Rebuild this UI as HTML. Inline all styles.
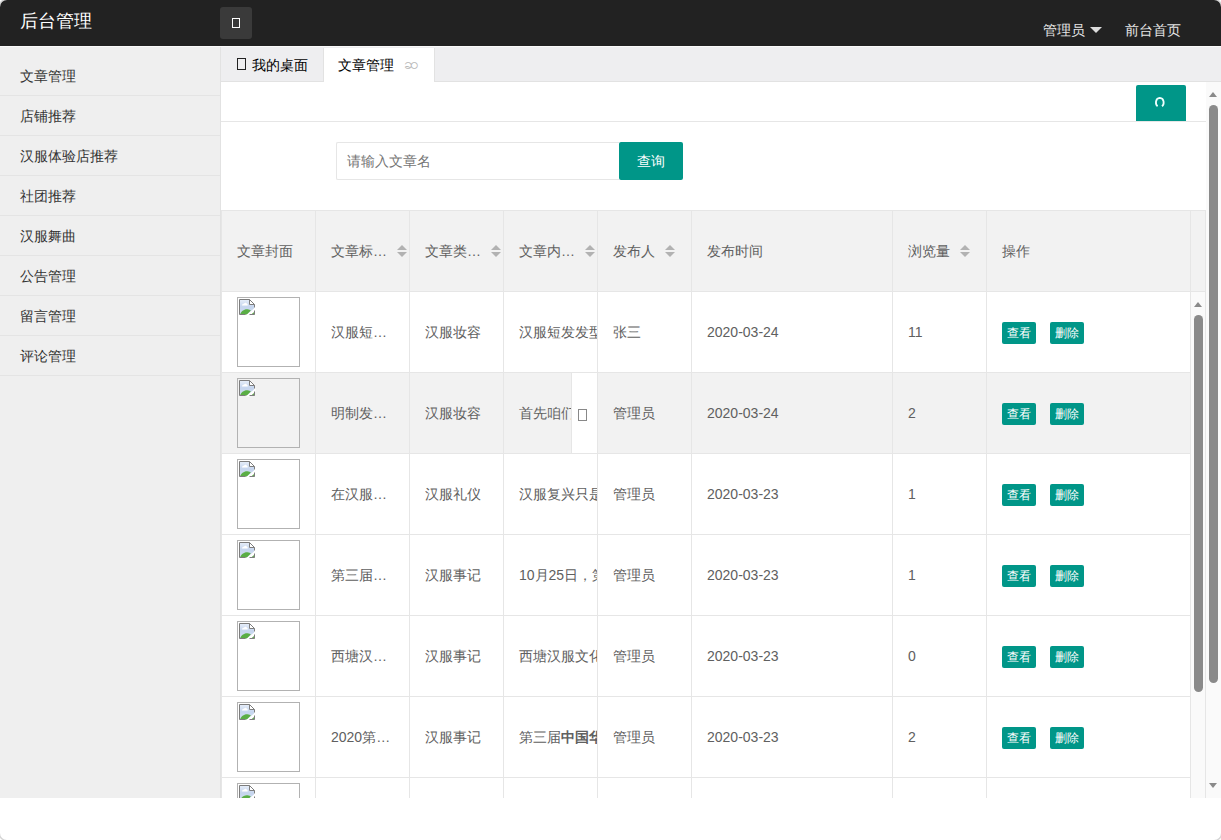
<!DOCTYPE html>
<html><head><meta charset="utf-8">
<style>
*{margin:0;padding:0;box-sizing:border-box}
html,body{width:1221px;height:840px;overflow:hidden;background:#fff;font-family:"Liberation Sans",sans-serif;font-size:14px;color:#333}
.abs{position:absolute}
#frame{position:absolute;left:0;top:0;width:1221px;height:840px;border-radius:7px;overflow:hidden;background:#fff;box-shadow:0 0 0 1.5px #d4d4d4}
#header{left:0;top:0;width:1221px;height:46px;background:#222}
#hl{left:0;top:46px;width:1221px;height:1px;background:#fafafa}
#logo{left:20px;top:9px;font-size:18px;line-height:24px;color:#fff}
#toggle{left:220px;top:7px;width:32px;height:32px;background:#3a3a3a;border-radius:3px}
#toggle i{position:absolute;left:12px;top:11px;width:8px;height:10px;border:1.5px solid #fff}
.hnav{top:20px;line-height:20px;font-size:14px;color:#e6e6e6}
#side{left:0;top:47px;width:221px;height:751px;background:#efefef;border-right:1px solid #e2e2e2}
#side ul{list-style:none;position:absolute;left:0;top:9px;width:220px}
#side li{height:40px;line-height:40px;padding-left:20px;border-bottom:1px solid #e4e4e4;color:#333;font-size:14px}
#tabbar{left:221px;top:47px;width:1000px;height:35px;background:#eeeef0;border-bottom:1px solid #e2e2e2}
.tab{top:0;height:36px;line-height:35px;font-size:14px;color:#000}
#content{left:221px;top:82px;width:1000px;height:716px;background:#fff;overflow:hidden}
</style></head><body>
<div id="frame">
  <div id="header" class="abs">
    <div id="logo" class="abs">后台管理</div>
    <div id="toggle" class="abs"><i></i></div>
    <div class="abs hnav" style="left:1043px">管理员</div>
    <div class="abs" style="left:1090px;top:27px;width:0;height:0;border-left:6px solid transparent;border-right:6px solid transparent;border-top:6px solid #ddd"></div>
    <div class="abs hnav" style="left:1125px">前台首页</div>
  </div>
  <div id="hl" class="abs"></div>
  <div id="side" class="abs">
    <ul>
      <li>文章管理</li><li>店铺推荐</li><li>汉服体验店推荐</li><li>社团推荐</li><li>汉服舞曲</li><li>公告管理</li><li>留言管理</li><li>评论管理</li>
    </ul>
  </div>
  <div id="tabbar" class="abs">
    <div class="abs tab" style="left:0;width:102px"><span class="abs" style="left:16px;top:11px;width:9px;height:12px;border:1.5px solid #222"></span><span class="abs" style="left:31px;top:1px">我的桌面</span></div>
    <div class="abs tab" style="left:102px;top:1px;width:112px;height:35px;background:#fff;border-left:1px solid #e2e2e2;border-right:1px solid #e2e2e2"><span class="abs" style="left:14px;top:0">文章管理</span><span class="abs" style="left:80px;top:-2px;font-size:15px;color:#b8b8b8">&#x1006;</span></div>
  </div>
  <div id="content" class="abs">
<div class="abs" style="left:0px;top:39px;width:985px;height:1px;background:#e6e6e6"></div>
<div class="abs" style="left:915px;top:3px;width:50px;height:36px;background:#009688;border-radius:2px 2px 0 0"><svg class="abs" style="left:18px;top:11px" width="12" height="12" viewBox="0 0 12 12"><path d="M3.6 10.2C1.2 8.5 1 2.2 5.8 1.8C10.6 2.2 10.4 8.5 8 10.2" fill="none" stroke="#f0fffd" stroke-width="1.8"/></svg></div>
<div class="abs" style="left:115px;top:60px;width:283px;height:38px;border:1px solid #e6e6e6;border-right:none;border-radius:2px 0 0 2px"><span class="abs" style="left:10px;top:9px;line-height:18px;color:#757575">请输入文章名</span></div>
<div class="abs" style="left:398px;top:60px;width:64px;height:38px;background:#009688;border-radius:2px;color:#fff;text-align:center;line-height:38px">查询</div>
<div class="abs" style="left:0px;top:128px;width:985px;height:82px;background:#f2f2f2;border:1px solid #e6e6e6;border-right:none"></div>
<div class="abs" style="left:16px;top:160px;width:150px;height:18px;line-height:18px;color:#606060;white-space:nowrap">文章封面</div>
<div class="abs" style="left:94px;top:128px;width:1px;height:82px;background:#e6e6e6"></div>
<div class="abs" style="left:110px;top:160px;width:150px;height:18px;line-height:18px;color:#606060;white-space:nowrap">文章标…</div>
<div class="abs" style="left:176px;top:163px;width:10px;height:12px;"><span class="abs" style="left:0;top:0;border:5px solid transparent;border-top:none;border-bottom:5px solid #b2b2b2"></span><span class="abs" style="left:0;top:7px;border:5px solid transparent;border-bottom:none;border-top:5px solid #b2b2b2"></span></div>
<div class="abs" style="left:188px;top:128px;width:1px;height:82px;background:#e6e6e6"></div>
<div class="abs" style="left:204px;top:160px;width:150px;height:18px;line-height:18px;color:#606060;white-space:nowrap">文章类…</div>
<div class="abs" style="left:270px;top:163px;width:10px;height:12px;"><span class="abs" style="left:0;top:0;border:5px solid transparent;border-top:none;border-bottom:5px solid #b2b2b2"></span><span class="abs" style="left:0;top:7px;border:5px solid transparent;border-bottom:none;border-top:5px solid #b2b2b2"></span></div>
<div class="abs" style="left:282px;top:128px;width:1px;height:82px;background:#e6e6e6"></div>
<div class="abs" style="left:298px;top:160px;width:150px;height:18px;line-height:18px;color:#606060;white-space:nowrap">文章内…</div>
<div class="abs" style="left:364px;top:163px;width:10px;height:12px;"><span class="abs" style="left:0;top:0;border:5px solid transparent;border-top:none;border-bottom:5px solid #b2b2b2"></span><span class="abs" style="left:0;top:7px;border:5px solid transparent;border-bottom:none;border-top:5px solid #b2b2b2"></span></div>
<div class="abs" style="left:376px;top:128px;width:1px;height:82px;background:#e6e6e6"></div>
<div class="abs" style="left:392px;top:160px;width:150px;height:18px;line-height:18px;color:#606060;white-space:nowrap">发布人</div>
<div class="abs" style="left:444px;top:163px;width:10px;height:12px;"><span class="abs" style="left:0;top:0;border:5px solid transparent;border-top:none;border-bottom:5px solid #b2b2b2"></span><span class="abs" style="left:0;top:7px;border:5px solid transparent;border-bottom:none;border-top:5px solid #b2b2b2"></span></div>
<div class="abs" style="left:470px;top:128px;width:1px;height:82px;background:#e6e6e6"></div>
<div class="abs" style="left:486px;top:160px;width:150px;height:18px;line-height:18px;color:#606060;white-space:nowrap">发布时间</div>
<div class="abs" style="left:671px;top:128px;width:1px;height:82px;background:#e6e6e6"></div>
<div class="abs" style="left:687px;top:160px;width:150px;height:18px;line-height:18px;color:#606060;white-space:nowrap">浏览量</div>
<div class="abs" style="left:739px;top:163px;width:10px;height:12px;"><span class="abs" style="left:0;top:0;border:5px solid transparent;border-top:none;border-bottom:5px solid #b2b2b2"></span><span class="abs" style="left:0;top:7px;border:5px solid transparent;border-bottom:none;border-top:5px solid #b2b2b2"></span></div>
<div class="abs" style="left:765px;top:128px;width:1px;height:82px;background:#e6e6e6"></div>
<div class="abs" style="left:781px;top:160px;width:150px;height:18px;line-height:18px;color:#606060;white-space:nowrap">操作</div>
<div class="abs" style="left:969px;top:128px;width:1px;height:82px;background:#e6e6e6"></div>
<div class="abs" style="left:984px;top:128px;width:1px;height:82px;background:#e6e6e6"></div>
<div class="abs" style="left:0px;top:209px;width:969px;height:82px;background:#fff;border-top:1px solid #e6e6e6;border-left:1px solid #e6e6e6"></div>
<div class="abs" style="left:94px;top:209px;width:1px;height:82px;background:#e6e6e6"></div>
<div class="abs" style="left:188px;top:209px;width:1px;height:82px;background:#e6e6e6"></div>
<div class="abs" style="left:282px;top:209px;width:1px;height:82px;background:#e6e6e6"></div>
<div class="abs" style="left:376px;top:209px;width:1px;height:82px;background:#e6e6e6"></div>
<div class="abs" style="left:470px;top:209px;width:1px;height:82px;background:#e6e6e6"></div>
<div class="abs" style="left:671px;top:209px;width:1px;height:82px;background:#e6e6e6"></div>
<div class="abs" style="left:765px;top:209px;width:1px;height:82px;background:#e6e6e6"></div>
<div class="abs" style="left:16px;top:215px;width:63px;height:70px;border:1px solid #b2b2b2;background:transparent;overflow:hidden"><svg class="abs" style="left:1px;top:1px" width="17" height="17" viewBox="0 0 17 17"><defs><linearGradient id="sk" x1="0" y1="0" x2="0" y2="1"><stop offset="0" stop-color="#e4ecf8"/><stop offset="0.5" stop-color="#c5d5ee"/><stop offset="1" stop-color="#d2def0"/></linearGradient></defs><path d="M1 1H10.5V5.5H15V15H1Z" fill="url(#sk)"/><path d="M3 6.5C3 5 4.5 4.5 5 4.8C5.5 3.5 7.5 3.5 8 5C9 5 9 6.5 8.5 6.5Z" fill="#fff"/><path d="M1 15.5C2 12.5 5 10 8.5 10.3C10 10.5 11 11 11.8 11.6L8 15.5Z" fill="#5aae45"/><path d="M11 15.5L15.5 12V15.5Z" fill="#67a956"/><path d="M10.5 1L15.5 6H10.5Z" fill="#fff"/><path d="M6.8 16.5L16.5 8.2V11.8L11 16.5Z" fill="#fff"/><path d="M0.5 15.5V0.5H10.5L15.5 5.5V8.5M15.5 11.5V15.5H10.5M6.5 15.5H0.5M10.5 0.5V5.5H15.5" fill="none" stroke="#7d7d7d"/></svg></div>
<div class="abs" style="left:110px;top:241px;width:78px;height:18px;line-height:18px;color:#606060;white-space:nowrap;overflow:hidden">汉服短…</div>
<div class="abs" style="left:204px;top:241px;width:78px;height:18px;line-height:18px;color:#606060;white-space:nowrap;overflow:hidden">汉服妆容</div>
<div class="abs" style="left:283px;top:210px;width:93px;height:80px;overflow:hidden"><span class="abs" style="left:15px;top:31px;line-height:18px;color:#606060;white-space:nowrap">汉服短发发型介绍</span></div>
<div class="abs" style="left:392px;top:241px;width:78px;height:18px;line-height:18px;color:#606060;white-space:nowrap;overflow:hidden">张三</div>
<div class="abs" style="left:486px;top:241px;width:185px;height:18px;line-height:18px;color:#606060;white-space:nowrap;overflow:hidden">2020-03-24</div>
<div class="abs" style="left:687px;top:241px;width:60px;height:18px;line-height:18px;color:#606060">11</div>
<div class="abs" style="left:781px;top:240px;width:34px;height:22px;background:#009688;border-radius:2px;color:#fff;font-size:12px;line-height:22px;text-align:center">查看</div>
<div class="abs" style="left:829px;top:240px;width:34px;height:22px;background:#009688;border-radius:2px;color:#fff;font-size:12px;line-height:22px;text-align:center">删除</div>
<div class="abs" style="left:0px;top:290px;width:969px;height:82px;background:#f2f2f2;border-top:1px solid #e6e6e6;border-left:1px solid #e6e6e6"></div>
<div class="abs" style="left:94px;top:290px;width:1px;height:82px;background:#e6e6e6"></div>
<div class="abs" style="left:188px;top:290px;width:1px;height:82px;background:#e6e6e6"></div>
<div class="abs" style="left:282px;top:290px;width:1px;height:82px;background:#e6e6e6"></div>
<div class="abs" style="left:376px;top:290px;width:1px;height:82px;background:#e6e6e6"></div>
<div class="abs" style="left:470px;top:290px;width:1px;height:82px;background:#e6e6e6"></div>
<div class="abs" style="left:671px;top:290px;width:1px;height:82px;background:#e6e6e6"></div>
<div class="abs" style="left:765px;top:290px;width:1px;height:82px;background:#e6e6e6"></div>
<div class="abs" style="left:16px;top:296px;width:63px;height:70px;border:1px solid #b2b2b2;background:transparent;overflow:hidden"><svg class="abs" style="left:1px;top:1px" width="17" height="17" viewBox="0 0 17 17"><defs><linearGradient id="sk" x1="0" y1="0" x2="0" y2="1"><stop offset="0" stop-color="#e4ecf8"/><stop offset="0.5" stop-color="#c5d5ee"/><stop offset="1" stop-color="#d2def0"/></linearGradient></defs><path d="M1 1H10.5V5.5H15V15H1Z" fill="url(#sk)"/><path d="M3 6.5C3 5 4.5 4.5 5 4.8C5.5 3.5 7.5 3.5 8 5C9 5 9 6.5 8.5 6.5Z" fill="#fff"/><path d="M1 15.5C2 12.5 5 10 8.5 10.3C10 10.5 11 11 11.8 11.6L8 15.5Z" fill="#5aae45"/><path d="M11 15.5L15.5 12V15.5Z" fill="#67a956"/><path d="M10.5 1L15.5 6H10.5Z" fill="#fff"/><path d="M6.8 16.5L16.5 8.2V11.8L11 16.5Z" fill="#fff"/><path d="M0.5 15.5V0.5H10.5L15.5 5.5V8.5M15.5 11.5V15.5H10.5M6.5 15.5H0.5M10.5 0.5V5.5H15.5" fill="none" stroke="#7d7d7d"/></svg></div>
<div class="abs" style="left:110px;top:322px;width:78px;height:18px;line-height:18px;color:#606060;white-space:nowrap;overflow:hidden">明制发…</div>
<div class="abs" style="left:204px;top:322px;width:78px;height:18px;line-height:18px;color:#606060;white-space:nowrap;overflow:hidden">汉服妆容</div>
<div class="abs" style="left:283px;top:291px;width:93px;height:80px;overflow:hidden"><span class="abs" style="left:15px;top:31px;line-height:18px;color:#606060;white-space:nowrap">首先咱们</span></div>
<div class="abs" style="left:392px;top:322px;width:78px;height:18px;line-height:18px;color:#606060;white-space:nowrap;overflow:hidden">管理员</div>
<div class="abs" style="left:486px;top:322px;width:185px;height:18px;line-height:18px;color:#606060;white-space:nowrap;overflow:hidden">2020-03-24</div>
<div class="abs" style="left:687px;top:322px;width:60px;height:18px;line-height:18px;color:#606060">2</div>
<div class="abs" style="left:781px;top:321px;width:34px;height:22px;background:#009688;border-radius:2px;color:#fff;font-size:12px;line-height:22px;text-align:center">查看</div>
<div class="abs" style="left:829px;top:321px;width:34px;height:22px;background:#009688;border-radius:2px;color:#fff;font-size:12px;line-height:22px;text-align:center">删除</div>
<div class="abs" style="left:0px;top:371px;width:969px;height:82px;background:#fff;border-top:1px solid #e6e6e6;border-left:1px solid #e6e6e6"></div>
<div class="abs" style="left:94px;top:371px;width:1px;height:82px;background:#e6e6e6"></div>
<div class="abs" style="left:188px;top:371px;width:1px;height:82px;background:#e6e6e6"></div>
<div class="abs" style="left:282px;top:371px;width:1px;height:82px;background:#e6e6e6"></div>
<div class="abs" style="left:376px;top:371px;width:1px;height:82px;background:#e6e6e6"></div>
<div class="abs" style="left:470px;top:371px;width:1px;height:82px;background:#e6e6e6"></div>
<div class="abs" style="left:671px;top:371px;width:1px;height:82px;background:#e6e6e6"></div>
<div class="abs" style="left:765px;top:371px;width:1px;height:82px;background:#e6e6e6"></div>
<div class="abs" style="left:16px;top:377px;width:63px;height:70px;border:1px solid #b2b2b2;background:transparent;overflow:hidden"><svg class="abs" style="left:1px;top:1px" width="17" height="17" viewBox="0 0 17 17"><defs><linearGradient id="sk" x1="0" y1="0" x2="0" y2="1"><stop offset="0" stop-color="#e4ecf8"/><stop offset="0.5" stop-color="#c5d5ee"/><stop offset="1" stop-color="#d2def0"/></linearGradient></defs><path d="M1 1H10.5V5.5H15V15H1Z" fill="url(#sk)"/><path d="M3 6.5C3 5 4.5 4.5 5 4.8C5.5 3.5 7.5 3.5 8 5C9 5 9 6.5 8.5 6.5Z" fill="#fff"/><path d="M1 15.5C2 12.5 5 10 8.5 10.3C10 10.5 11 11 11.8 11.6L8 15.5Z" fill="#5aae45"/><path d="M11 15.5L15.5 12V15.5Z" fill="#67a956"/><path d="M10.5 1L15.5 6H10.5Z" fill="#fff"/><path d="M6.8 16.5L16.5 8.2V11.8L11 16.5Z" fill="#fff"/><path d="M0.5 15.5V0.5H10.5L15.5 5.5V8.5M15.5 11.5V15.5H10.5M6.5 15.5H0.5M10.5 0.5V5.5H15.5" fill="none" stroke="#7d7d7d"/></svg></div>
<div class="abs" style="left:110px;top:403px;width:78px;height:18px;line-height:18px;color:#606060;white-space:nowrap;overflow:hidden">在汉服…</div>
<div class="abs" style="left:204px;top:403px;width:78px;height:18px;line-height:18px;color:#606060;white-space:nowrap;overflow:hidden">汉服礼仪</div>
<div class="abs" style="left:283px;top:372px;width:93px;height:80px;overflow:hidden"><span class="abs" style="left:15px;top:31px;line-height:18px;color:#606060;white-space:nowrap">汉服复兴只是一个</span></div>
<div class="abs" style="left:392px;top:403px;width:78px;height:18px;line-height:18px;color:#606060;white-space:nowrap;overflow:hidden">管理员</div>
<div class="abs" style="left:486px;top:403px;width:185px;height:18px;line-height:18px;color:#606060;white-space:nowrap;overflow:hidden">2020-03-23</div>
<div class="abs" style="left:687px;top:403px;width:60px;height:18px;line-height:18px;color:#606060">1</div>
<div class="abs" style="left:781px;top:402px;width:34px;height:22px;background:#009688;border-radius:2px;color:#fff;font-size:12px;line-height:22px;text-align:center">查看</div>
<div class="abs" style="left:829px;top:402px;width:34px;height:22px;background:#009688;border-radius:2px;color:#fff;font-size:12px;line-height:22px;text-align:center">删除</div>
<div class="abs" style="left:0px;top:452px;width:969px;height:82px;background:#fff;border-top:1px solid #e6e6e6;border-left:1px solid #e6e6e6"></div>
<div class="abs" style="left:94px;top:452px;width:1px;height:82px;background:#e6e6e6"></div>
<div class="abs" style="left:188px;top:452px;width:1px;height:82px;background:#e6e6e6"></div>
<div class="abs" style="left:282px;top:452px;width:1px;height:82px;background:#e6e6e6"></div>
<div class="abs" style="left:376px;top:452px;width:1px;height:82px;background:#e6e6e6"></div>
<div class="abs" style="left:470px;top:452px;width:1px;height:82px;background:#e6e6e6"></div>
<div class="abs" style="left:671px;top:452px;width:1px;height:82px;background:#e6e6e6"></div>
<div class="abs" style="left:765px;top:452px;width:1px;height:82px;background:#e6e6e6"></div>
<div class="abs" style="left:16px;top:458px;width:63px;height:70px;border:1px solid #b2b2b2;background:transparent;overflow:hidden"><svg class="abs" style="left:1px;top:1px" width="17" height="17" viewBox="0 0 17 17"><defs><linearGradient id="sk" x1="0" y1="0" x2="0" y2="1"><stop offset="0" stop-color="#e4ecf8"/><stop offset="0.5" stop-color="#c5d5ee"/><stop offset="1" stop-color="#d2def0"/></linearGradient></defs><path d="M1 1H10.5V5.5H15V15H1Z" fill="url(#sk)"/><path d="M3 6.5C3 5 4.5 4.5 5 4.8C5.5 3.5 7.5 3.5 8 5C9 5 9 6.5 8.5 6.5Z" fill="#fff"/><path d="M1 15.5C2 12.5 5 10 8.5 10.3C10 10.5 11 11 11.8 11.6L8 15.5Z" fill="#5aae45"/><path d="M11 15.5L15.5 12V15.5Z" fill="#67a956"/><path d="M10.5 1L15.5 6H10.5Z" fill="#fff"/><path d="M6.8 16.5L16.5 8.2V11.8L11 16.5Z" fill="#fff"/><path d="M0.5 15.5V0.5H10.5L15.5 5.5V8.5M15.5 11.5V15.5H10.5M6.5 15.5H0.5M10.5 0.5V5.5H15.5" fill="none" stroke="#7d7d7d"/></svg></div>
<div class="abs" style="left:110px;top:484px;width:78px;height:18px;line-height:18px;color:#606060;white-space:nowrap;overflow:hidden">第三届…</div>
<div class="abs" style="left:204px;top:484px;width:78px;height:18px;line-height:18px;color:#606060;white-space:nowrap;overflow:hidden">汉服事记</div>
<div class="abs" style="left:283px;top:453px;width:93px;height:80px;overflow:hidden"><span class="abs" style="left:15px;top:31px;line-height:18px;color:#606060;white-space:nowrap">10月25日，第三届</span></div>
<div class="abs" style="left:392px;top:484px;width:78px;height:18px;line-height:18px;color:#606060;white-space:nowrap;overflow:hidden">管理员</div>
<div class="abs" style="left:486px;top:484px;width:185px;height:18px;line-height:18px;color:#606060;white-space:nowrap;overflow:hidden">2020-03-23</div>
<div class="abs" style="left:687px;top:484px;width:60px;height:18px;line-height:18px;color:#606060">1</div>
<div class="abs" style="left:781px;top:483px;width:34px;height:22px;background:#009688;border-radius:2px;color:#fff;font-size:12px;line-height:22px;text-align:center">查看</div>
<div class="abs" style="left:829px;top:483px;width:34px;height:22px;background:#009688;border-radius:2px;color:#fff;font-size:12px;line-height:22px;text-align:center">删除</div>
<div class="abs" style="left:0px;top:533px;width:969px;height:82px;background:#fff;border-top:1px solid #e6e6e6;border-left:1px solid #e6e6e6"></div>
<div class="abs" style="left:94px;top:533px;width:1px;height:82px;background:#e6e6e6"></div>
<div class="abs" style="left:188px;top:533px;width:1px;height:82px;background:#e6e6e6"></div>
<div class="abs" style="left:282px;top:533px;width:1px;height:82px;background:#e6e6e6"></div>
<div class="abs" style="left:376px;top:533px;width:1px;height:82px;background:#e6e6e6"></div>
<div class="abs" style="left:470px;top:533px;width:1px;height:82px;background:#e6e6e6"></div>
<div class="abs" style="left:671px;top:533px;width:1px;height:82px;background:#e6e6e6"></div>
<div class="abs" style="left:765px;top:533px;width:1px;height:82px;background:#e6e6e6"></div>
<div class="abs" style="left:16px;top:539px;width:63px;height:70px;border:1px solid #b2b2b2;background:transparent;overflow:hidden"><svg class="abs" style="left:1px;top:1px" width="17" height="17" viewBox="0 0 17 17"><defs><linearGradient id="sk" x1="0" y1="0" x2="0" y2="1"><stop offset="0" stop-color="#e4ecf8"/><stop offset="0.5" stop-color="#c5d5ee"/><stop offset="1" stop-color="#d2def0"/></linearGradient></defs><path d="M1 1H10.5V5.5H15V15H1Z" fill="url(#sk)"/><path d="M3 6.5C3 5 4.5 4.5 5 4.8C5.5 3.5 7.5 3.5 8 5C9 5 9 6.5 8.5 6.5Z" fill="#fff"/><path d="M1 15.5C2 12.5 5 10 8.5 10.3C10 10.5 11 11 11.8 11.6L8 15.5Z" fill="#5aae45"/><path d="M11 15.5L15.5 12V15.5Z" fill="#67a956"/><path d="M10.5 1L15.5 6H10.5Z" fill="#fff"/><path d="M6.8 16.5L16.5 8.2V11.8L11 16.5Z" fill="#fff"/><path d="M0.5 15.5V0.5H10.5L15.5 5.5V8.5M15.5 11.5V15.5H10.5M6.5 15.5H0.5M10.5 0.5V5.5H15.5" fill="none" stroke="#7d7d7d"/></svg></div>
<div class="abs" style="left:110px;top:565px;width:78px;height:18px;line-height:18px;color:#606060;white-space:nowrap;overflow:hidden">西塘汉…</div>
<div class="abs" style="left:204px;top:565px;width:78px;height:18px;line-height:18px;color:#606060;white-space:nowrap;overflow:hidden">汉服事记</div>
<div class="abs" style="left:283px;top:534px;width:93px;height:80px;overflow:hidden"><span class="abs" style="left:15px;top:31px;line-height:18px;color:#606060;white-space:nowrap">西塘汉服文化周</span></div>
<div class="abs" style="left:392px;top:565px;width:78px;height:18px;line-height:18px;color:#606060;white-space:nowrap;overflow:hidden">管理员</div>
<div class="abs" style="left:486px;top:565px;width:185px;height:18px;line-height:18px;color:#606060;white-space:nowrap;overflow:hidden">2020-03-23</div>
<div class="abs" style="left:687px;top:565px;width:60px;height:18px;line-height:18px;color:#606060">0</div>
<div class="abs" style="left:781px;top:564px;width:34px;height:22px;background:#009688;border-radius:2px;color:#fff;font-size:12px;line-height:22px;text-align:center">查看</div>
<div class="abs" style="left:829px;top:564px;width:34px;height:22px;background:#009688;border-radius:2px;color:#fff;font-size:12px;line-height:22px;text-align:center">删除</div>
<div class="abs" style="left:0px;top:614px;width:969px;height:82px;background:#fff;border-top:1px solid #e6e6e6;border-left:1px solid #e6e6e6"></div>
<div class="abs" style="left:94px;top:614px;width:1px;height:82px;background:#e6e6e6"></div>
<div class="abs" style="left:188px;top:614px;width:1px;height:82px;background:#e6e6e6"></div>
<div class="abs" style="left:282px;top:614px;width:1px;height:82px;background:#e6e6e6"></div>
<div class="abs" style="left:376px;top:614px;width:1px;height:82px;background:#e6e6e6"></div>
<div class="abs" style="left:470px;top:614px;width:1px;height:82px;background:#e6e6e6"></div>
<div class="abs" style="left:671px;top:614px;width:1px;height:82px;background:#e6e6e6"></div>
<div class="abs" style="left:765px;top:614px;width:1px;height:82px;background:#e6e6e6"></div>
<div class="abs" style="left:16px;top:620px;width:63px;height:70px;border:1px solid #b2b2b2;background:transparent;overflow:hidden"><svg class="abs" style="left:1px;top:1px" width="17" height="17" viewBox="0 0 17 17"><defs><linearGradient id="sk" x1="0" y1="0" x2="0" y2="1"><stop offset="0" stop-color="#e4ecf8"/><stop offset="0.5" stop-color="#c5d5ee"/><stop offset="1" stop-color="#d2def0"/></linearGradient></defs><path d="M1 1H10.5V5.5H15V15H1Z" fill="url(#sk)"/><path d="M3 6.5C3 5 4.5 4.5 5 4.8C5.5 3.5 7.5 3.5 8 5C9 5 9 6.5 8.5 6.5Z" fill="#fff"/><path d="M1 15.5C2 12.5 5 10 8.5 10.3C10 10.5 11 11 11.8 11.6L8 15.5Z" fill="#5aae45"/><path d="M11 15.5L15.5 12V15.5Z" fill="#67a956"/><path d="M10.5 1L15.5 6H10.5Z" fill="#fff"/><path d="M6.8 16.5L16.5 8.2V11.8L11 16.5Z" fill="#fff"/><path d="M0.5 15.5V0.5H10.5L15.5 5.5V8.5M15.5 11.5V15.5H10.5M6.5 15.5H0.5M10.5 0.5V5.5H15.5" fill="none" stroke="#7d7d7d"/></svg></div>
<div class="abs" style="left:110px;top:646px;width:78px;height:18px;line-height:18px;color:#606060;white-space:nowrap;overflow:hidden">2020第…</div>
<div class="abs" style="left:204px;top:646px;width:78px;height:18px;line-height:18px;color:#606060;white-space:nowrap;overflow:hidden">汉服事记</div>
<div class="abs" style="left:283px;top:615px;width:93px;height:80px;overflow:hidden"><span class="abs" style="left:15px;top:31px;line-height:18px;color:#606060;white-space:nowrap">第三届<b>中国华服</b></span></div>
<div class="abs" style="left:392px;top:646px;width:78px;height:18px;line-height:18px;color:#606060;white-space:nowrap;overflow:hidden">管理员</div>
<div class="abs" style="left:486px;top:646px;width:185px;height:18px;line-height:18px;color:#606060;white-space:nowrap;overflow:hidden">2020-03-23</div>
<div class="abs" style="left:687px;top:646px;width:60px;height:18px;line-height:18px;color:#606060">2</div>
<div class="abs" style="left:781px;top:645px;width:34px;height:22px;background:#009688;border-radius:2px;color:#fff;font-size:12px;line-height:22px;text-align:center">查看</div>
<div class="abs" style="left:829px;top:645px;width:34px;height:22px;background:#009688;border-radius:2px;color:#fff;font-size:12px;line-height:22px;text-align:center">删除</div>
<div class="abs" style="left:0px;top:695px;width:969px;height:82px;background:#fff;border-top:1px solid #e6e6e6;border-left:1px solid #e6e6e6"></div>
<div class="abs" style="left:94px;top:695px;width:1px;height:82px;background:#e6e6e6"></div>
<div class="abs" style="left:188px;top:695px;width:1px;height:82px;background:#e6e6e6"></div>
<div class="abs" style="left:282px;top:695px;width:1px;height:82px;background:#e6e6e6"></div>
<div class="abs" style="left:376px;top:695px;width:1px;height:82px;background:#e6e6e6"></div>
<div class="abs" style="left:470px;top:695px;width:1px;height:82px;background:#e6e6e6"></div>
<div class="abs" style="left:671px;top:695px;width:1px;height:82px;background:#e6e6e6"></div>
<div class="abs" style="left:765px;top:695px;width:1px;height:82px;background:#e6e6e6"></div>
<div class="abs" style="left:16px;top:701px;width:63px;height:70px;border:1px solid #b2b2b2;background:transparent;overflow:hidden"><svg class="abs" style="left:1px;top:1px" width="17" height="17" viewBox="0 0 17 17"><defs><linearGradient id="sk" x1="0" y1="0" x2="0" y2="1"><stop offset="0" stop-color="#e4ecf8"/><stop offset="0.5" stop-color="#c5d5ee"/><stop offset="1" stop-color="#d2def0"/></linearGradient></defs><path d="M1 1H10.5V5.5H15V15H1Z" fill="url(#sk)"/><path d="M3 6.5C3 5 4.5 4.5 5 4.8C5.5 3.5 7.5 3.5 8 5C9 5 9 6.5 8.5 6.5Z" fill="#fff"/><path d="M1 15.5C2 12.5 5 10 8.5 10.3C10 10.5 11 11 11.8 11.6L8 15.5Z" fill="#5aae45"/><path d="M11 15.5L15.5 12V15.5Z" fill="#67a956"/><path d="M10.5 1L15.5 6H10.5Z" fill="#fff"/><path d="M6.8 16.5L16.5 8.2V11.8L11 16.5Z" fill="#fff"/><path d="M0.5 15.5V0.5H10.5L15.5 5.5V8.5M15.5 11.5V15.5H10.5M6.5 15.5H0.5M10.5 0.5V5.5H15.5" fill="none" stroke="#7d7d7d"/></svg></div>
<div class="abs" style="left:350px;top:291px;width:26px;height:80px;background:#fff;border-left:1px solid #e6e6e6"><span class="abs" style="left:6px;top:36px;width:9px;height:12px;border:1px solid #888"></span></div>
<div class="abs" style="left:969px;top:209px;width:16px;height:507px;background:#fafafa;border-left:1px solid #e6e6e6;border-right:1px solid #e6e6e6;border-top:1px solid #e6e6e6"></div>
<div class="abs" style="left:973px;top:220px;width:9px;height:5px;"><span class="abs" style="left:0;top:0;border-left:4.5px solid transparent;border-right:4.5px solid transparent;border-bottom:5px solid #8a8a8a"></span></div>
<div class="abs" style="left:973px;top:233px;width:9px;height:377px;background:#8a8a8a;border-radius:4.5px"></div>
<div class="abs" style="left:985px;top:0px;width:15px;height:716px;background:#fafafa"></div>
<div class="abs" style="left:988px;top:10px;width:9px;height:5px;"><span class="abs" style="left:0;top:0;border-left:4.5px solid transparent;border-right:4.5px solid transparent;border-bottom:5px solid #8a8a8a"></span></div>
<div class="abs" style="left:988px;top:23px;width:9px;height:578px;background:#8a8a8a;border-radius:4.5px"></div>
<div class="abs" style="left:988px;top:701px;width:9px;height:5px;"><span class="abs" style="left:0;top:0;border-left:4.5px solid transparent;border-right:4.5px solid transparent;border-top:5px solid #8a8a8a"></span></div>
  </div>
</div>
</body></html>
